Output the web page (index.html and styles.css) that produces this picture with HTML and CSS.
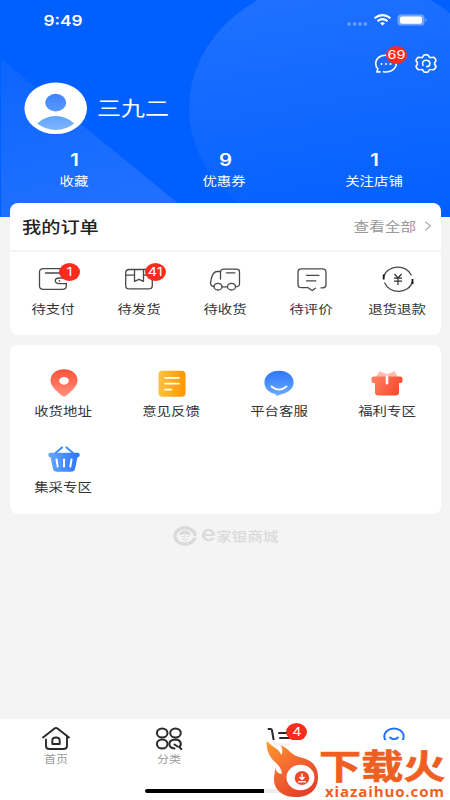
FILE: index.html
```html
<!DOCTYPE html>
<html lang="zh-CN">
<head>
<meta charset="utf-8">
<title>我的</title>
<link rel="stylesheet" href="styles.css">
</head>
<body>
<div class="phone">
  <header class="hero">
    <svg class="hero-bg" width="450" height="217" viewBox="0 0 450 217">
      <defs>
        <linearGradient id="disc" x1=".4" y1="0" x2=".6" y2="1"><stop offset="0" stop-color="#2171ff"/><stop offset="1" stop-color="#005fff"/></linearGradient>
        <linearGradient id="tri" x1="0" y1="0" x2=".3" y2="1"><stop offset="0" stop-color="#0c65ff"/><stop offset="1" stop-color="#2070ff"/></linearGradient>
      </defs>
      <ellipse cx="344" cy="108" rx="155" ry="130" fill="url(#disc)"/>
      <path d="M1 59L184 208V217H1Z" fill="url(#tri)"/>
    </svg>
    <div class="status">
      <span class="time wide">9:49</span>
      <svg width="82" height="14" viewBox="0 0 82 14">
        <g fill="#fff" opacity=".35"><circle cx="3" cy="11" r="1.800"/><circle cx="8.500" cy="11" r="1.800"/><circle cx="14" cy="11" r="1.800"/><circle cx="19.500" cy="11" r="1.800"/></g>
        <g fill="none" stroke="#fff" stroke-width="2"><path d="M28.500 5.300Q36.500-1 44.500 5.300M31.500 8.100Q36.500 4.200 41.500 8.100"/></g>
        <path d="M34 10.200Q36.500 8.400 39 10.200L36.500 12.600Z" fill="#fff"/>
        <rect x="51.500" y="1.500" width="27" height="11" rx="3.500" fill="#fff" opacity=".38"/>
        <rect x="54" y="3.500" width="22" height="7.200" rx="2" fill="#fff"/>
        <path d="M79.500 5.500q2 1.700 0 3.500z" fill="#fff" opacity=".5"/>
      </svg>
    </div>
    <div class="tools">
      <div class="tool">
        <svg width="24" height="20" viewBox="0 0 24 20"><g fill="none" stroke="#fff" stroke-width="1.600" stroke-linecap="round" stroke-linejoin="round"><path d="M14 1.600C7 .2 1.700 4 1.700 9.800c0 2 .8 3.700 2.100 5.100l-.9 3H6M9.500 17.800c7 1.200 12.800-2.600 12.800-8.800"/></g><g fill="#fff"><circle cx="7.500" cy="10" r="1"/><circle cx="12" cy="10" r="1"/><circle cx="16.500" cy="10" r="1"/></g></svg>
        <span class="badge badge-msg"><span class="wide">69</span></span>
      </div>
      <svg width="22" height="19" viewBox="0 0 22 19"><g fill="none" stroke="#fff" stroke-width="1.600" stroke-linejoin="round" stroke-linecap="round"><path d="M8.800 1.200Q11 .3 13.200 1.200L14.300 3.100Q15 3.700 16 3.500L18.500 3.300Q20.500 4.300 21 6.500L19.800 8.500Q19.400 9.500 19.800 10.500L21 12.500Q20.500 14.700 18.500 15.700L16 15.500Q15 15.300 14.300 15.900L13.200 17.800Q11 18.700 8.800 17.800L7.700 15.900Q7 15.300 6 15.500L3.500 15.700Q1.500 14.700 1 12.500L2.200 10.500Q2.600 9.500 2.200 8.500L1 6.500Q1.500 4.300 3.500 3.300L6 3.500Q7 3.700 7.700 3.100Z"/><path d="M8 11.300C6.500 8.500 8.500 6.200 11 6.200c2.300 0 3.900 1.500 3.900 3.300s-1.500 3.100-3.200 3.100"/></g></svg>
    </div>
    <div class="profile">
      <svg width="64" height="53" viewBox="0 0 64 53">
        <defs><linearGradient id="head" x2="0" y2="1"><stop stop-color="#3f83fb"/><stop offset="1" stop-color="#5a98ff"/></linearGradient><linearGradient id="body" x2="0" y2="1"><stop stop-color="#62a3ff"/><stop offset="1" stop-color="#7fb6ff"/></linearGradient></defs>
        <ellipse cx="31.700" cy="26.300" rx="31.300" ry="25.800" fill="#fff"/>
        <ellipse cx="31.700" cy="20.600" rx="10.500" ry="8.800" fill="url(#head)"/>
        <path d="M13.200 41.500Q21 34 31.700 34T50.200 41.500Q42 48 31.700 48T13.200 41.500Z" fill="url(#body)"/>
      </svg>
      <span class="name wide">三九二</span>
    </div>
    <div class="stats">
      <div class="stat"><b class="wide">1</b><span class="wide">收藏</span></div>
      <div class="stat"><b class="wide">9</b><span class="wide">优惠券</span></div>
      <div class="stat"><b class="wide">1</b><span class="wide">关注店铺</span></div>
    </div>
  </header>

  <main class="content">
    <section class="card orders">
      <div class="orders-head">
        <h2 class="wide">我的订单</h2>
        <a class="all"><span class="wide">查看全部</span><svg width="8" height="10" viewBox="0 0 8 10"><path d="M1.200.8L6.500 5 1.200 9.200" fill="none" stroke="#aaa" stroke-width="1.100"/></svg></a>
      </div>
      <div class="order-row">
        <div class="order">
          <svg width="32" height="26" viewBox="0 0 32 26"><g fill="none" stroke="#484848" stroke-width="1.300" stroke-linecap="round"><path d="M29.300 9.500V6q0-3.400-4-3.400H6.500q-4 0-4 3.400v14q0 3.400 4 3.400h18.800q4 0 4-3.400v-2.500M8.500 7h15"/><path d="M29.300 12h-7q-4 0-4 2.800t4 2.800h7"/></g><circle cx="22.500" cy="14.800" r=".9" fill="#484848"/></svg>
          <span class="badge badge-order"><span class="wide">1</span></span><span class="label wide">待支付</span>
        </div>
        <div class="order">
          <svg width="32" height="26" viewBox="0 0 32 26"><g fill="none" stroke="#484848" stroke-width="1.300" stroke-linejoin="round"><path d="M6.500 3.500h19q3.800 0 3.800 3.200v13q0 3.200-3.800 3.200h-19q-3.800 0-3.800-3.200v-13q0-3.200 3.800-3.200ZM3 9.200h8.500M20.500 9.200H29M11.500 3.500v11.800l4.500-2 4.500 2V3.500"/></g></svg>
          <span class="badge badge-order"><span class="wide">41</span></span><span class="label wide">待发货</span>
        </div>
        <div class="order">
          <svg width="32" height="26" viewBox="0 0 32 26"><g fill="none" stroke="#484848" stroke-width="1.300" stroke-linecap="round" stroke-linejoin="round"><path d="M5 20.500Q1.500 20 1.500 17l.7-4Q4 5.500 8 5.500h3.500V13M11.500 6q0-2.800 3.500-2.800h12.500q3 0 3 2.600v12q0 2.800-3.800 3M13 20.800h5.200M17.500 6.800h8.500"/><ellipse cx="9" cy="20.700" rx="4" ry="3.300"/><ellipse cx="22.500" cy="20.700" rx="4" ry="3.300"/></g></svg>
          <span class="label wide">待收货</span>
        </div>
        <div class="order">
          <svg width="32" height="26" viewBox="0 0 32 26"><path d="M25 21.800h1.800q3.200-.3 3.200-3.100V6q0-3.200-3.800-3.200H5.800Q2 2.800 2 6v12.500q0 3.200 3.800 3.200H12l4.200 2.800 3.200-2.300M10.500 9.300H23M10.500 14.900h9.300" fill="none" stroke="#484848" stroke-width="1.300" stroke-linecap="round" stroke-linejoin="round"/></svg>
          <span class="label wide">待评价</span>
        </div>
        <div class="order">
          <svg width="32" height="26" viewBox="0 0 32 26"><g fill="none" stroke="#484848" stroke-width="1.200"><path d="M1.800 10.500C5-1.500 25-2 29.500 9.500M30.500 15.500C27 28.500 7 28.500 2.500 16.500"/><path d="M1.700 13.500V8.500M30.500 13v5" stroke="#111" stroke-width="1.800"/><path d="M12.500 8l3.500 4L19.500 8M16 12V19M12 12.200h8M12 15.200h8" stroke="#333"/></g></svg>
          <span class="label wide">退货退款</span>
        </div>
      </div>
    </section>

    <section class="card services">
      <div class="service">
        <svg width="32" height="28" viewBox="0 0 32 28"><defs><linearGradient id="red" x2="0" y2="1"><stop stop-color="#ff5037"/><stop offset="1" stop-color="#ff917f"/></linearGradient></defs><path d="M16 .3C8 .3 2.500 5 2.500 11.500c0 5.200 4.500 9.300 11.500 15.300q2 1.300 4 0C25 20.800 29.500 16.700 29.500 11.500 29.500 5 24 .3 16 .3Z" fill="url(#red)"/><ellipse cx="16" cy="11.800" rx="4.800" ry="3.900" fill="#fff"/></svg>
        <span class="label wide">收货地址</span>
      </div>
      <div class="service">
        <svg width="32" height="28" viewBox="0 0 32 28"><defs><linearGradient id="gold"><stop stop-color="#ffc23e"/><stop offset="1" stop-color="#ff9500"/></linearGradient></defs><rect x="2.500" y="1.700" width="27" height="26" rx="4" fill="url(#gold)"/><path d="M9 8.800h14M9 14.600h14M9 20.600h6.500" stroke="#fff" stroke-width="1.700" stroke-linecap="round"/></svg>
        <span class="label wide">意见反馈</span>
      </div>
      <div class="service">
        <svg width="32" height="28" viewBox="0 0 32 28"><defs><linearGradient id="blue" x2="0" y2="1"><stop stop-color="#2f75ff"/><stop offset="1" stop-color="#68aaff"/></linearGradient></defs><path d="M16 1.700C7.500 1.700 1.400 6.600 1.400 13.300S6.500 24 12.500 25q.8 3 4 .8C25 24 30.600 20 30.600 13.300S24.500 1.700 16 1.700Z" fill="url(#blue)"/><path d="M8.500 17.500q7.500 6.300 15 0" fill="none" stroke="#fff" stroke-width="1.800" stroke-linecap="round"/></svg>
        <span class="label wide">平台客服</span>
      </div>
      <div class="service">
        <svg width="32" height="28" viewBox="0 0 32 28"><defs><linearGradient id="gift" y2=".4"><stop stop-color="#ff8268"/><stop offset="1" stop-color="#ff4c2e"/></linearGradient></defs><path d="M5 8L8.500 2.200 16 5.200l7.500-3L27 8Z" fill="#ffbcae"/><path d="M2.500 7.500h27q2 0 2 2v2.500q0 2-2 2H28v9.500q0 3-3.500 3h-17q-3.500 0-3.500-3V14H2.500q-2 0-2-2V9.500q0-2 2-2Z" fill="url(#gift)"/><path d="M16 7.800v6.500" stroke="#fff" stroke-width="2.600" stroke-linecap="round"/></svg>
        <span class="label wide">福利专区</span>
      </div>
      <div class="service">
        <svg width="32" height="28" viewBox="0 0 32 28"><defs><linearGradient id="basket"><stop stop-color="#66a8ff"/><stop offset="1" stop-color="#2a73ff"/></linearGradient></defs><path d="M7.500 8l6.500-5.500M25 8L18.500 2.500" fill="none" stroke="#468dff" stroke-width="2.200" stroke-linecap="round"/><path d="M2 7.800h28q2 .3 1.700 2.500-.2 1.900-2.200 2L27 24q-.7 2.800-4 2.800H9q-3.300 0-4-2.800L2.500 12.300q-2-.1-2.200-2Q0 8.100 2 7.800Z" fill="url(#basket)"/><path d="M8.500 14.500l1.200 7M16 14.500v7M23.500 14.500l-1.200 7" stroke="#fff" stroke-width="2" stroke-linecap="round"/></svg>
        <span class="label wide">集采专区</span>
      </div>
    </section>

    <div class="brand">
      <svg width="24" height="20" viewBox="0 0 24 20"><ellipse cx="12" cy="10" rx="10.100" ry="8.200" fill="none" stroke="#dadada" stroke-width="3.400"/><path d="M16 10.800h8" stroke="#f4f4f4" stroke-width="1.500"/><path d="M6 9.500Q7 4.500 12 4.500T18 9.500Q12 6.500 6 9.500Z" fill="#dadada"/><path d="M8.500 10.500h2M14 10.500h2M9 13q3 2.600 6 0M12 9v3" fill="none" stroke="#dadada" stroke-width="1"/></svg>
      <span class="brand-e">e</span><span class="brand-name wide">家银商城</span>
    </div>
  </main>

  <nav class="tabbar">
    <div class="tab">
      <svg width="28" height="24" viewBox="0 0 28 24"><g fill="none" stroke="#292929" stroke-width="1.900" stroke-linecap="round" stroke-linejoin="round"><path d="M1 10.500L12.500 1.500q1.500-.9 3 0L27 10.500M4 12.500V19q0 3 3.500 3h14q3.500 0 3.500-3V9.500"/><path d="M10.300 17v-3.300q0-3.200 3.700-3.200t3.700 3.200V17Z"/></g></svg>
      <span class="wide">首页</span>
    </div>
    <div class="tab">
      <svg width="28" height="24" viewBox="0 0 28 24"><g fill="none" stroke="#292929" stroke-width="2" stroke-linecap="round"><ellipse cx="7.200" cy="6" rx="5.300" ry="4.500"/><ellipse cx="20.500" cy="6" rx="5.300" ry="4.500"/><ellipse cx="7.200" cy="17" rx="5.300" ry="4.500"/><path d="M19.500 21.400c-7-.3-7-8.700 1-8.900 5 0 6.800 4.700 3.800 7.500l2 2M19.500 17.500l3 2"/></g></svg>
      <span class="wide">分类</span>
    </div>
    <div class="tab">
      <svg width="28" height="24" viewBox="0 0 28 24"><path d="M1.500 2h2q1.200 0 1.400 1L7 15q.5 2.500 3 2.500h12.500M12 6h12M13 11h11" fill="none" stroke="#292929" stroke-width="2" stroke-linecap="round"/></svg>
      <span class="badge badge-cart"><span class="wide">4</span></span>
    </div>
    <div class="tab">
      <svg width="28" height="24" viewBox="0 0 28 24"><g fill="none" stroke="#246fff" stroke-width="1.900" stroke-linecap="round"><ellipse cx="14" cy="9.500" rx="9.700" ry="8"/><path d="M10 10.500q4 3.500 8 0"/></g></svg>
    </div>
    <div class="home-bar"></div>
  </nav>

  <aside class="mark">
    <svg class="flame" width="55" height="59" viewBox="0 0 55 59">
      <defs><linearGradient id="fire" x1="0" y1="0" x2=".7" y2="1"><stop stop-color="#ff9b2e"/><stop offset=".55" stop-color="#f26430"/><stop offset="1" stop-color="#e33f25"/></linearGradient></defs>
      <path d="M2.700 0C8 6 14.500 7 17.500 14c1.500-3 1-6.500-.8-10C27 9 27 14.500 37 16.500 47.500 19 54 25 54 36 54 49 45 56 32.500 56 19 56 9.500 49 10 37c.2-4 1.300-6 1-10 1.500 4 4 6.500 7 5.500-1.500-9-7-10-11-16C4 12 2 6 2.700 0Z" fill="url(#fire)"/>
      <ellipse cx="36.500" cy="36.500" rx="14" ry="12.800" fill="#fff"/>
      <ellipse cx="38" cy="37" rx="7.300" ry="7" fill="#e94b28"/>
      <path d="M38 32.500v5M35.500 36l2.500 2.400 2.500-2.400M34 40.700h8" fill="none" stroke="#fff" stroke-width="1.500"/>
    </svg>
    <div class="mark-text"><span class="mark-name">下载火</span><span class="mark-url">xiazaihuo.com</span></div>
  </aside>
</div>
</body>
</html>
```
FILE: styles.css
```css
* { box-sizing: border-box; }
body {
  margin: 0;
  background: #f4f4f4;
  color: #333;
  font-family: Inter, "Noto Sans CJK SC", sans-serif;
  font-size: 12px;
}
svg { display: block; flex: none; }
.wide { display: inline-block; transform: scaleX(1.2); white-space: nowrap; }
.phone {
  position: relative;
  width: 450px;
  height: 800px;
  overflow: hidden;
  display: flex;
  flex-direction: column;
}

.hero { position: relative; height: 217px; flex: none; background: #005fff; color: #fff; }
.hero-bg { position: absolute; inset: 0; }
.status {
  position: relative;
  height: 40px;
  padding: 0 22px 0 46px;
  display: flex;
  align-items: center;
  justify-content: space-between;
}
.time { font-size: 15px; font-weight: 600; transform: scaleX(1.15); }
.tools {
  position: relative;
  height: 42px;
  padding: 14px 13px 0 0;
  display: flex;
  justify-content: flex-end;
  gap: 17px;
}
.tool { position: relative; }
.badge {
  position: absolute;
  height: 18px;
  width: 21px;
  border-radius: 50%;
  background: #fb2b1e;
  color: #fff;
  font-size: 12px;
  line-height: 18px;
  text-align: center;
}
.badge-msg { left: 12px; top: -8px; }
.profile { position: relative; height: 53px; padding-left: 24px; display: flex; align-items: center; gap: 9px; }
.name { font-size: 20px; font-weight: 400; transform-origin: left; margin-top: -2px; }
.stats { position: relative; display: grid; grid-template-columns: repeat(3, 1fr); margin-top: 15px; }
.stat { display: flex; flex-direction: column; align-items: center; }
.stat b { font-size: 17px; font-weight: 600; line-height: 20px; }
.stat span { line-height: 18px; margin: 3px 1px 0 0; }

.content { position: relative; flex: 1; margin-top: -14px; padding: 0 9px 0 10px; }
.card { background: #fff; border-radius: 8px; }
.orders { height: 132px; }
.orders-head {
  height: 49px;
  padding: 0 9px 2px 12px;
  border-bottom: 2px solid #f4f4f4;
  display: flex;
  align-items: center;
  justify-content: space-between;
}
.orders-head h2 { margin: 0; font-size: 16px; font-weight: 500; color: #222; transform-origin: left; }
.all { display: flex; align-items: center; gap: 8px; font-size: 13px; color: #999; }
.all .wide { transform-origin: right; }
.order-row { display: grid; grid-template-columns: repeat(5, 1fr); padding-top: 14px; }
.order { position: relative; display: flex; flex-direction: column; align-items: center; }
.label { line-height: 18px; margin-right: 1px; }
.order .label { margin-top: 9px; }
.badge-order { left: 49px; top: -3px; }
.services {
  height: 169px;
  margin-top: 10px;
  padding-top: 24px;
  display: grid;
  grid-template-columns: repeat(4, 1fr);
  grid-auto-rows: 76px;
}
.service { display: flex; flex-direction: column; align-items: center; }
.service .label { margin-top: 6px; }

.brand { display: flex; align-items: center; margin: 12px 0 0 163px; height: 20px; color: #dadada; }
.brand-e { font-size: 21px; line-height: 20px; font-weight: 500; margin: -4px 0 0 4px; transform: scaleX(1.2); transform-origin: left; }
.brand-name { font-size: 13px; font-weight: 500; margin: -1px 0 0 3px; transform-origin: left; }

.tabbar { position: relative; height: 81px; background: #fff; display: grid; grid-template-columns: repeat(4, 1fr); padding-top: 8px; }
.tab { position: relative; display: flex; flex-direction: column; align-items: center; font-size: 10px; color: #999; }
.tab > .wide { line-height: 14px; margin-top: 1px; }
.badge-cart { left: 61px; top: -4px; }
.home-bar { position: absolute; left: 145px; top: 70px; width: 160px; height: 4px; border-radius: 2px; background: #000; }

.mark {
  position: absolute;
  right: 0;
  bottom: 0;
  width: 186px;
  height: 60px;
  display: flex;
  background: rgba(255, 255, 255, .93);
}
.flame { margin-top: 1px; }
.mark-text { display: flex; flex-direction: column; color: #f05f22; font-weight: 700; padding-top: 8px; }
.mark-name {
  height: 37px;
  font-family: "Noto Sans CJK SC", sans-serif;
  font-size: 34px;
  line-height: 34px;
  white-space: nowrap;
  transform: scaleX(1.24);
  transform-origin: left;
  -webkit-text-stroke: .6px #f05f22;
}
.mark-url { margin: 0 0 0 6px; font-family: "Open Sans", sans-serif; font-size: 15px; line-height: 13px; letter-spacing: .9px; }
```
